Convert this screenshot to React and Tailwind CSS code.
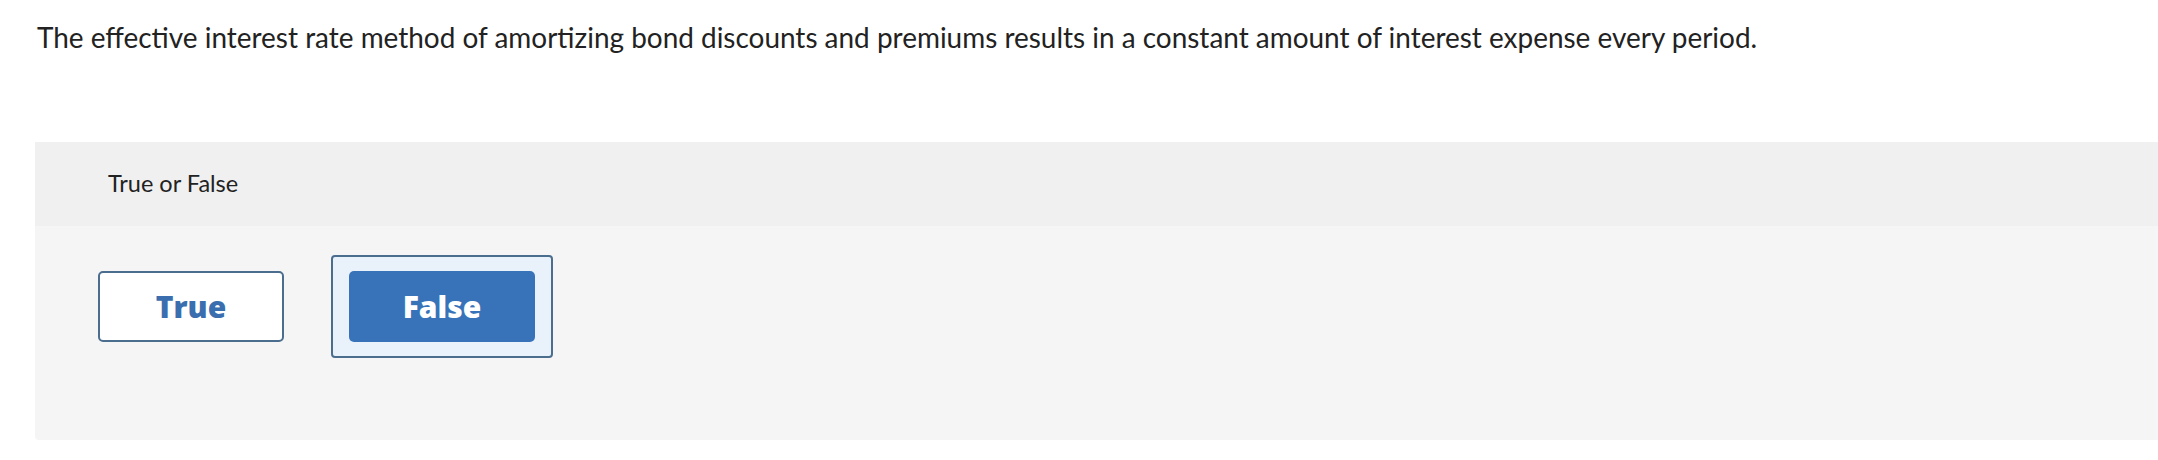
import React, { useState } from "react";

const options = ["True", "False"];

const App = () => {
  const [answer, setAnswer] = useState("False");

  return (
    <div className="w-[2158px] h-[460px] bg-white font-['Lato','Open_Sans',sans-serif] overflow-hidden">
      <p className="pl-[37px] pt-[21px] text-[27.95px] leading-[32px] text-[#222222]">
        The effective interest rate method of amortizing bond discounts and
        premiums results in a constant amount of interest expense every period.
      </p>

      {/* question panel */}
      <div className="ml-[35px] mt-[89px] rounded-bl-[4px] overflow-hidden">
        <div className="h-[84px] bg-[#f0f0f0] flex items-center pl-[73px] text-[23.5px] text-[#222222]">
          True or False
        </div>
        <div className="h-[214px] bg-[#f5f5f5] flex items-start gap-[29px] pl-[45px] pt-[29px]">
          {options.map((opt) => {
            const selected = answer === opt;
            return (
              <div
                key={opt}
                className={
                  selected
                    ? "border-2 border-[#4b6d8e] bg-[#e9f1fb] rounded-[4px] px-[16px] py-[14px]"
                    : "border-2 border-transparent px-[16px] py-[14px]"
                }
              >
                <button
                  type="button"
                  onClick={() => setAnswer(opt)}
                  className={
                    selected
                      ? "w-[186px] h-[71px] rounded-[5px] bg-[#3873b9] text-white text-[30px] font-['Open_Sans',sans-serif] font-extrabold"
                      : "w-[186px] h-[71px] rounded-[5px] bg-white border-2 border-[#4b6d8e] text-[#3a6eae] text-[30px] font-['Open_Sans',sans-serif] font-extrabold"
                  }
                >
                  {opt}
                </button>
              </div>
            );
          })}
        </div>
      </div>
    </div>
  );
};

export default App;
